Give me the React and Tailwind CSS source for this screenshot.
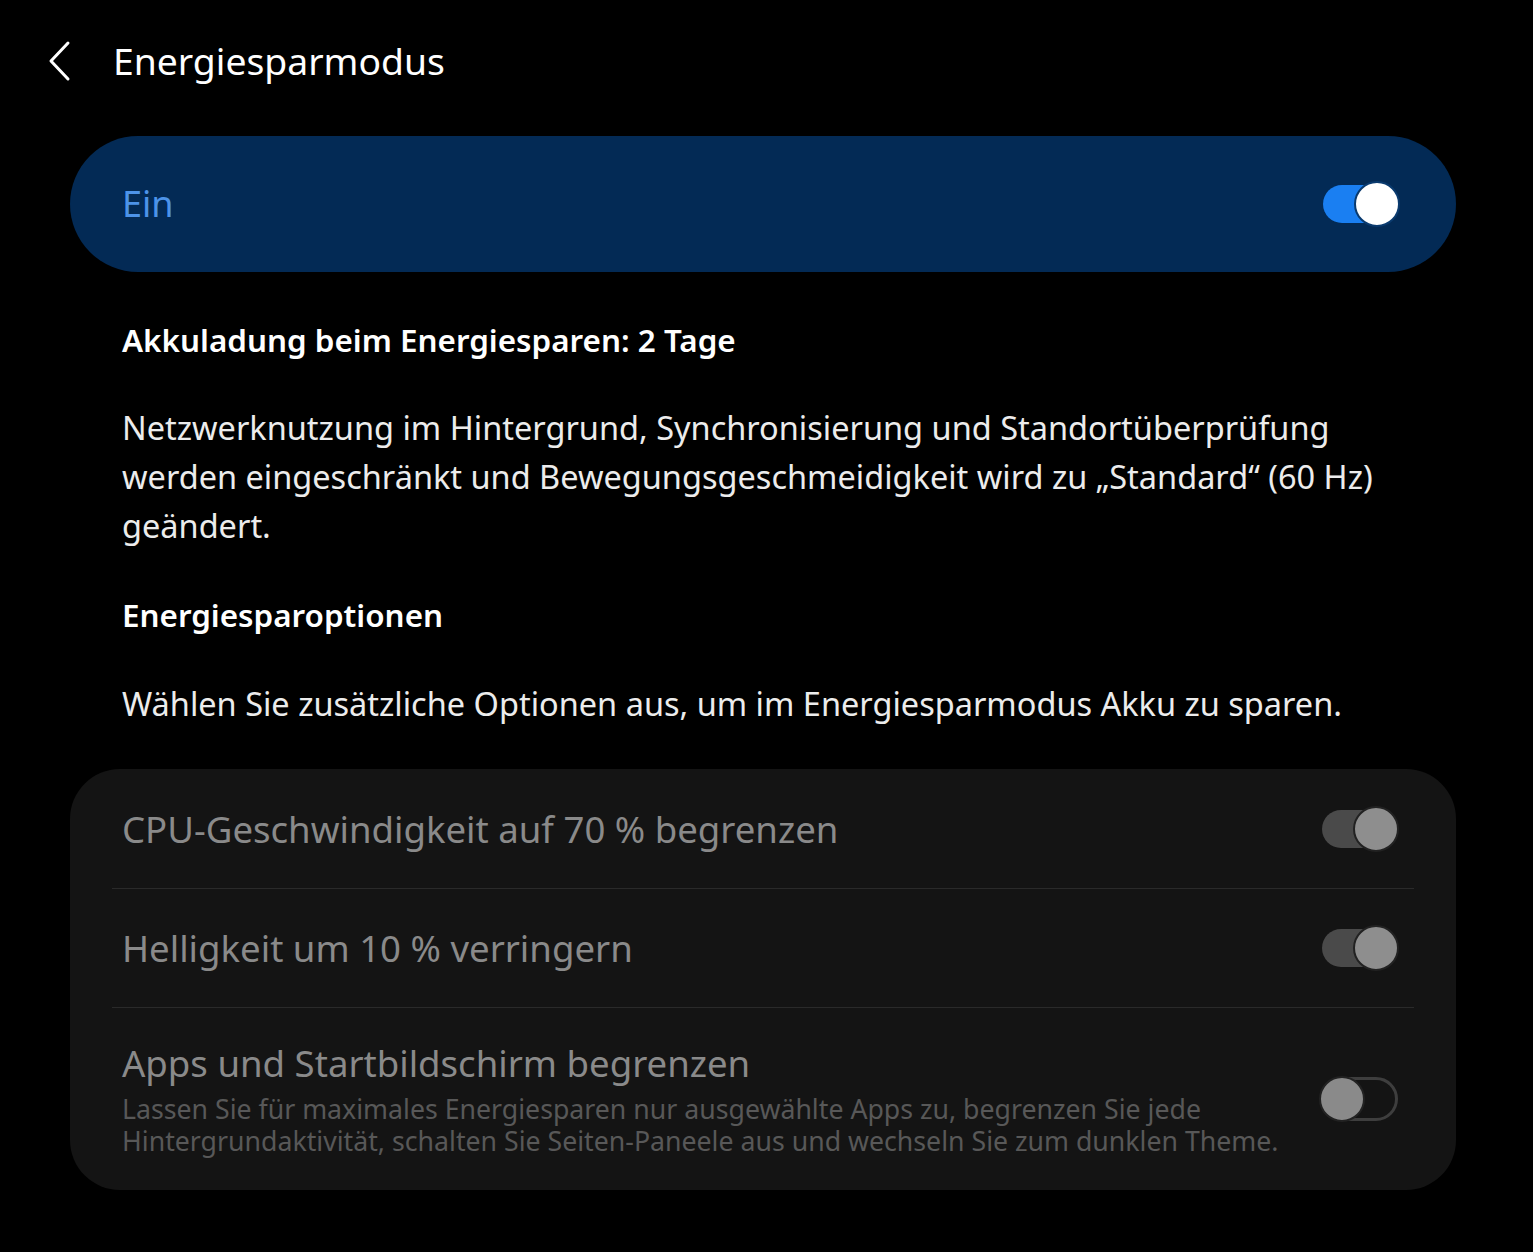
import React from 'react';

const Toggle = ({ on, dim }) => {
  if (on && !dim) {
    return (
      <div className="relative w-[76px] h-[46px] flex items-center">
        <div className="w-[76px] h-[38px] rounded-full bg-[#1a7ff2]" />
        <div className="absolute right-[-1px] top-0 w-[46px] h-[46px] rounded-full bg-white border-2 border-[#0a3a6e]" />
      </div>
    );
  }
  if (on) {
    return (
      <div className="relative w-[76px] h-[46px] flex items-center">
        <div className="w-[76px] h-[38px] rounded-full bg-[#4a4a4a]" />
        <div className="absolute right-[-1px] top-0 w-[46px] h-[46px] rounded-full bg-[#8e8e8e] border-2 border-[#222]" />
      </div>
    );
  }
  return (
    <div className="relative w-[78px] h-[46px] flex items-center">
      <div className="w-[78px] h-[44px] rounded-full border-[3px] border-[#3e3e3e]" />
      <div className="absolute left-[-1px] top-0 w-[46px] h-[46px] rounded-full bg-[#8a8a8a] border-2 border-[#222]" />
    </div>
  );
};

const OptionRow = ({ title, sub, on }) => (
  <div className="flex items-center justify-between pl-[52px] pr-[58px]">
    <div className="flex flex-col">
      <span className="text-[36.6px] leading-[44px] text-[#8a8a8a]">{title}</span>
      {sub && (
        <span className="text-[26.7px] leading-[32px] text-[#585858] mt-[8px]">{sub}</span>
      )}
    </div>
    <Toggle on={on} dim />
  </div>
);

export default function App() {
  return (
    <div className="min-h-[1252px] w-full bg-black text-white" style={{ fontFamily: '"Noto Sans", "Open Sans", sans-serif' }}>
      {/* header */}
      <div className="flex items-center h-[122px] pl-[46px]">
        <svg width="28" height="42" viewBox="0 0 28 42" fill="none" stroke="white" strokeWidth="3" strokeLinecap="round" strokeLinejoin="round">
          <path d="M22 3 L5 21 L22 39" />
        </svg>
        <span className="ml-[39px] text-[37.3px] leading-none text-white">Energiesparmodus</span>
      </div>

      <div className="px-[70px] pt-[14px] pb-[60px] w-[1526px]">
        {/* main switch */}
        <div className="h-[136px] rounded-full bg-[#032a55] flex items-center justify-between pl-[52px] pr-[57px]">
          <span className="text-[36px] text-[#4d93e8]">Ein</span>
          <Toggle on />
        </div>

        <div className="px-[52px] pr-[30px]">
          <div className="mt-[48px] text-[31.4px] font-semibold leading-[40px]">Akkuladung beim Energiesparen: 2 Tage</div>
          <p className="mt-[43px] text-[32.5px] leading-[49px] text-[#ececec]">
            Netzwerknutzung im Hintergrund, Synchronisierung und Standortüberprüfung werden eingeschränkt und Bewegungsgeschmeidigkeit wird zu „Standard“ (60 Hz) geändert.
          </p>
          <div className="mt-[45px] text-[31.4px] font-semibold leading-[40px]">Energiesparoptionen</div>
          <p className="mt-[49px] text-[32.5px] leading-[40px] text-[#ececec]">
            Wählen Sie zusätzliche Optionen aus, um im Energiesparmodus Akku zu sparen.
          </p>
        </div>

        {/* options card */}
        <div className="mt-[45px] rounded-[50px] bg-[#141414] flex flex-col">
          <div className="h-[119px] flex flex-col justify-center">
            <OptionRow title="CPU-Geschwindigkeit auf 70 % begrenzen" on />
          </div>
          <div className="mx-[42px] h-[1px] bg-[#2a2a2a]" />
          <div className="h-[118px] flex flex-col justify-center">
            <OptionRow title="Helligkeit um 10 % verringern" on />
          </div>
          <div className="mx-[42px] h-[1px] bg-[#2a2a2a]" />
          <div className="h-[182px] flex flex-col justify-center">
            <OptionRow
              title="Apps und Startbildschirm begrenzen"
              sub={<>Lassen Sie für maximales Energiesparen nur ausgewählte Apps zu, begrenzen Sie jede<br />Hintergrundaktivität, schalten Sie Seiten-Paneele aus und wechseln Sie zum dunklen Theme.</>}
              on={false}
            />
          </div>
        </div>
      </div>
    </div>
  );
}
